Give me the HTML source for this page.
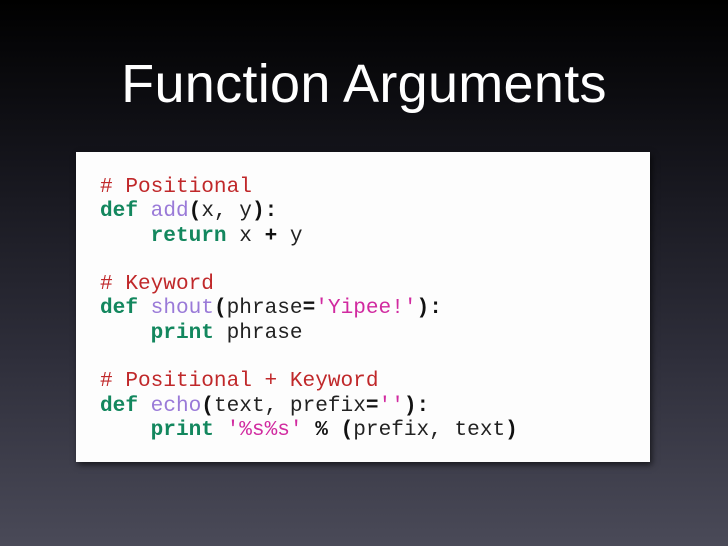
<!DOCTYPE html>
<html><head><style>
html,body{margin:0;padding:0}
body{width:728px;height:546px;overflow:hidden;position:relative;background:linear-gradient(#000 0%,#15151c 30%,#2e2e3a 65%,#4a4a58 100%);font-family:"Liberation Sans",sans-serif}
h1{position:absolute;top:53px;left:0;width:728px;text-align:center;margin:0;color:#fff;font-weight:normal;font-size:54px;letter-spacing:0.3px}
.card{position:absolute;left:76px;top:152px;width:574px;height:310px;background:#fdfdfd;box-shadow:2px 3px 6px rgba(0,0,0,.6)}
pre{position:absolute;left:100px;top:175px;margin:0;font-family:"Liberation Mono",monospace;font-size:21.1px;line-height:24.3px;color:#222}
.c{color:#c0282a}.k{color:#13875e;font-weight:bold}.f{color:#9a7ad8}.s{color:#d12aa0}.b{font-weight:bold;color:#111}
</style></head><body>
<h1>Function Arguments</h1>
<div class="card"></div>
<pre><span class="c"># Positional</span>
<span class="k">def</span> <span class="f">add</span><span class="b">(</span>x, y<span class="b">):</span>
    <span class="k">return</span> x <span class="b">+</span> y

<span class="c"># Keyword</span>
<span class="k">def</span> <span class="f">shout</span><span class="b">(</span>phrase<span class="b">=</span><span class="s">'Yipee!'</span><span class="b">):</span>
    <span class="k">print</span> phrase

<span class="c"># Positional + Keyword</span>
<span class="k">def</span> <span class="f">echo</span><span class="b">(</span>text, prefix<span class="b">=</span><span class="s">''</span><span class="b">):</span>
    <span class="k">print</span> <span class="s">'%s%s'</span> <span class="b">%</span> <span class="b">(</span>prefix, text<span class="b">)</span></pre>
</body></html>
